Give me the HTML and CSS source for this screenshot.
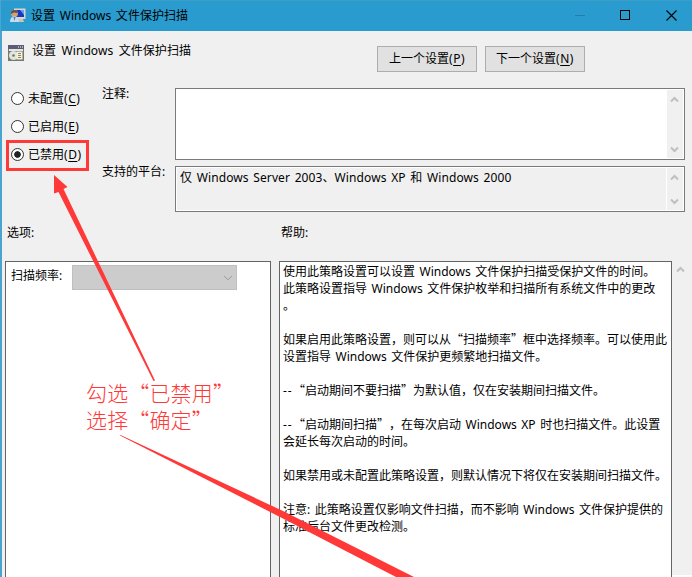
FILE: index.html
```html
<!DOCTYPE html>
<html lang="zh-CN">
<head>
<meta charset="utf-8">
<title>设置 Windows 文件保护扫描</title>
<link rel="stylesheet" href="styles.css">
</head>
<body>
<div class="window">
  <header class="titlebar">
    <svg class="app-icon" width="16" height="16" viewBox="0 0 16 16">
      <rect x="4" y="0.5" width="11.5" height="10.5" fill="#d9d6cc"/>
      <rect x="5.5" y="2" width="8.5" height="7" fill="#1738c0"/>
      <path d="M10 2h4v5z" fill="#6f9cf0"/>
      <path d="M8 11h5l1 3H7z" fill="#c9c5b8"/>
      <circle cx="4.500" cy="5.500" r="3.500" fill="#d0a279"/>
      <path d="M1 6a3.500 3.500 0 0 1 7-1L4 4.500z" fill="#69513f"/>
      <path d="M0 14c0-4 2-5.500 4.500-5.500S9 10 9 14z" fill="#c6dcec"/>
      <path d="M3.500 9l1 4 1-4z" fill="#4779a2"/>
    </svg>
    <h1 class="title">设置 Windows 文件保护扫描</h1>
    <div class="controls">
      <svg width="46" height="31"><path d="M20 15.500h10" stroke="#237da7"/></svg>
      <svg width="46" height="31"><rect x="19.500" y="10.500" width="9" height="9" fill="none" stroke="#000"/></svg>
      <svg width="46" height="31"><path d="M19.500 10.500l10 10m0-10l-10 10" stroke="#000" stroke-width="1.100"/></svg>
    </div>
  </header>

  <section class="heading">
    <svg class="policy-icon" width="16" height="16" viewBox="0 0 16 16">
      <rect width="16" height="16" fill="#77786f"/>
      <rect y="0" width="16" height="4" fill="#5a5c78"/>
      <path d="M10 2h1m1 0h1m1 0h1" stroke="#fff"/>
      <rect x="1" y="4" width="14" height="2" fill="#e6e6e2"/>
      <circle cx="5.500" cy="10.500" r="4.500" fill="#dfe5d8"/>
      <circle cx="5.500" cy="10.500" r="1.300" fill="#6f7a6e"/>
      <rect x="8.500" y="6.500" width="6" height="8" fill="#f4efd6"/>
      <path d="M10 8.500h3M10 10.500h3M10 12.500h3" stroke="#8b8772"/>
    </svg>
    <span class="policy-name">设置 Windows 文件保护扫描</span>
    <button class="btn">上一个设置<span class="key">(<u>P</u>)</span></button>
    <button class="btn">下一个设置<span class="key">(<u>N</u>)</span></button>
  </section>

  <section class="state">
    <div class="radios">
      <label class="radio"><i class="dot"></i>未配置<span class="key">(<u>C</u>)</span></label>
      <label class="radio"><i class="dot"></i>已启用<span class="key">(<u>E</u>)</span></label>
      <label class="radio marked"><i class="dot on"></i>已禁用<span class="key">(<u>D</u>)</span></label>
    </div>
    <div class="fields">
      <span class="label">注释:</span>
      <div class="box comment">
        <div class="content"></div>
        <div class="scroll">
          <svg width="9" height="7"><path d="M1 5.500l3.500-3.500L8 5.500"/></svg>
          <svg width="9" height="7"><path d="M1 1.500L4.500 5 8 1.500"/></svg>
        </div>
      </div>
      <span class="label">支持的平台:</span>
      <div class="box platform">
        <div class="content">仅 Windows Server 2003、Windows XP 和 Windows 2000</div>
        <div class="scroll">
          <svg width="9" height="7"><path d="M1 5.500l3.500-3.500L8 5.500"/></svg>
          <svg width="9" height="7"><path d="M1 1.500L4.500 5 8 1.500"/></svg>
        </div>
      </div>
    </div>
  </section>

  <section class="captions"><span>选项:</span><span>帮助:</span></section>

  <section class="panes">
    <div class="options">
      <span>扫描频率:</span>
      <div class="combo"><svg width="10" height="6"><path d="M1 .8l4 4 4-4"/></svg></div>
    </div>
    <div class="help">
      <p>使用此策略设置可以设置 Windows 文件保护扫描受保护文件的时间。</p>
      <p>此策略设置指导 Windows 文件保护枚举和扫描所有系统文件中的更改</p>
      <p>。</p>
      <p class="gap">如果启用此策略设置，则可以从<q>“</q>扫描频率<q>”</q>框中选择频率。可以使用此</p>
      <p>设置指导 Windows 文件保护更频繁地扫描文件。</p>
      <p class="gap"><b class="dash">--</b><q>“</q>启动期间不要扫描<q>”</q>为默认值，仅在安装期间扫描文件。</p>
      <p class="gap"><b class="dash">--</b><q>“</q>启动期间扫描<q>”</q>，在每次启动 Windows XP 时也扫描文件。此设置</p>
      <p>会延长每次启动的时间。</p>
      <p class="gap">如果禁用或未配置此策略设置，则默认情况下将仅在安装期间扫描文件。</p>
      <p class="gap">注意: 此策略设置仅影响文件扫描，而不影响 Windows 文件保护提供的</p>
      <p>标准后台文件更改检测。</p>
    </div>
    <div class="page-scroll"><svg width="9" height="7"><path d="M1 5.500l3.500-3.500L8 5.500"/></svg></div>
  </section>
</div>

<svg class="arrows" width="692" height="577" viewBox="0 0 692 577">
  <path d="M54 175L67.500 187 63.500 189 155 380.500 153.500 381 58.500 192 54 193.500z"/>
  <path d="M120 435.500L120.500 435 283 511 414 577H396L280 517z"/>
</svg>
<div class="note">勾选“已禁用”<br>选择“确定”</div>
</body>
</html>
```

FILE: styles.css
```css
* { box-sizing: border-box; }
body {
  margin: 0;
  width: 692px;
  height: 577px;
  overflow: hidden;
  position: relative;
  background: #f0f0f0;
  color: #000;
  font: 12px/17px "Noto Sans", "Noto Sans CJK SC", sans-serif;
  word-spacing: 1.4px;
  text-spacing-trim: space-all;
}
.window {
  height: 577px;
  display: flex;
  flex-direction: column;
  border-left: 2px solid #4ba3cf;
}
.titlebar {
  height: 31px;
  flex: none;
  display: flex;
  align-items: center;
  margin-left: -1px;
  padding-left: 9px;
  background: #299bce;
  border-top: 1px solid #3c9fca;
}
.title { margin: -1px 0 0 5px; font-size: 12px; font-weight: 400; flex: 1; letter-spacing: .05px; }
.controls { display: flex; height: 31px; margin: -1px -1px 0 0; }
svg { display: block; flex: none; }

.heading {
  height: 57px;
  flex: none;
  display: flex;
  align-items: flex-start;
  padding: 14px 107px 0 6px;
}
.policy-name { flex: 1; margin: -3px 0 0 8px; letter-spacing: .07px; word-spacing: 2.2px; }
.btn {
  width: 100px;
  height: 26px;
  margin: 1px 0 0 8px;
  padding: 0 0 1px;
  border: 1px solid #adadad;
  background: #e1e1e1;
  color: #000;
  font: inherit;
}
.key { letter-spacing: .5px; }
u { text-underline-offset: 2px; }

.state { height: 124px; flex: none; display: flex; }
.radios { width: 98px; padding-left: 4px; }
.radio {
  width: 83px;
  height: 28px;
  display: flex;
  align-items: center;
  padding-left: 5px;
}
.radio:first-child { margin-top: -4px; }
.radio.marked { height: 31px; border: 3px solid #ff3838; padding: 0 0 2px 2px; }
.dot {
  width: 13px;
  height: 13px;
  border: 1px solid #333;
  border-radius: 50%;
  background: #fff;
  margin-right: 4px;
}
.dot.on { background: radial-gradient(circle, #222 2.9px, #fff 3.7px); }
.fields {
  display: grid;
  grid-template-columns: 75px 510px;
  grid-template-rows: 72px 46px;
  row-gap: 6px;
}
.label { padding-left: 2px; margin-top: -3px; }
.box { display: flex; border: 1px solid #7a7a7a; padding: 1px; background: #fff; }
.content { flex: 1; padding: 1px 0 0 3px; letter-spacing: .1px; }
.platform .content { background: #f0f0f0; margin-right: 1px; }
.scroll {
  width: 16px;
  display: flex;
  flex-direction: column;
  justify-content: space-between;
  padding: 6px 0 5px 3px;
  background: #f0f0f0;
}
.scroll path, .page-scroll path { fill: none; stroke: #bfbfbf; stroke-width: 2; }

.captions { height: 49px; flex: none; display: flex; padding: 12px 0 0 5px; }
.captions span { width: 274px; }

.panes { flex: 1; display: flex; padding-left: 3px; }
.options {
  width: 266px;
  display: flex;
  align-items: flex-start;
  padding: 6px 0 0 5px;
  background: #fff;
  border: 1px solid #646464;
  border-bottom: 0;
}
.options span { width: 61px; margin-top: -1px; }
.combo {
  width: 165px;
  height: 25px;
  margin-top: -3px;
  padding: 9px 0 0 150px;
  background: #ccc;
  border: 1px solid #bfbfbf;
}
.combo path { fill: none; stroke: #999; }
.help {
  width: 393px;
  margin-left: 8px;
  padding: 1px 0 0 3px;
  background: #fff;
  border: 1px solid #646464;
  border-bottom: 0;
  white-space: nowrap;
}
.help p { margin: 0; height: 17px; }
.help p.gap { margin-top: 17px; }
q { quotes: none; font-family: "Noto Sans CJK SC", sans-serif; line-height: 1; }
.dash { display: inline-block; width: 10px; font-weight: 400; letter-spacing: .8px; }
.page-scroll { flex: 1; padding: 5px 0 0 4px; border-bottom: 2px solid #fff; }

.arrows { position: absolute; left: 0; top: 0; fill: #ff3838; }
.note {
  position: absolute;
  left: 86px;
  top: 379px;
  color: #ff3838;
  font: 300 21px/27px "Noto Sans CJK SC", sans-serif;
  letter-spacing: .15px;
  white-space: nowrap;
}
```
